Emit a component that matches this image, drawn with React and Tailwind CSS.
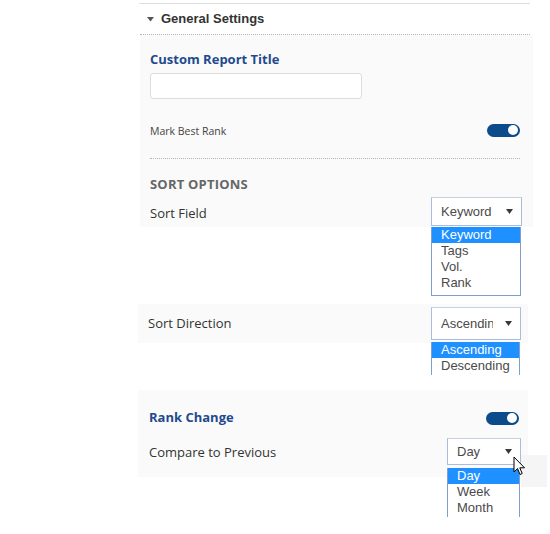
import React from "react";

function Caret({ className = "" }) {
  return (
    <svg width="7" height="5" viewBox="0 0 7 5" className={className}>
      <path d="M0 0 H7 L3.5 5 Z" fill="#3a3a3a" />
    </svg>
  );
}

function Toggle() {
  return (
    <div className="w-[33px] h-[13px] rounded-full bg-[#0b4a8b] flex items-center justify-end pr-[2px]">
      <div className="w-[10px] h-[10px] rounded-full bg-white" />
    </div>
  );
}

function Select({ value, options, w, h, textW, listTop = 2, listH, showBottom = true }) {
  return (
    <div className="relative" style={{ width: w }}>
      <div
        className="border border-[#a9bedf] border-t-[#c8d2de] bg-white flex items-center pl-[9px] pr-[8px] justify-between font-['Liberation_Sans',Arial,sans-serif] text-[13px] text-[#4a4a4a]"
        style={{ height: h }}
      >
        <span className="overflow-hidden whitespace-nowrap" style={{ width: textW }}>{value}</span>
        <Caret />
      </div>
      <div
        className={`absolute left-0 right-[1px] bg-white border-l border-r border-[#7f9fd0] overflow-hidden font-['Liberation_Sans',Arial,sans-serif] text-[13px] text-[#4a4a4a] ${showBottom ? "border-b" : ""}`}
        style={{ top: `calc(100% + ${listTop}px)`, height: listH }}
      >
        {options.map((o, i) => (
          <div
            key={o}
            className={`h-[16px] leading-[16px] pl-[9px] whitespace-nowrap ${i === 0 ? "bg-[#1e90ff] text-white" : ""}`}
          >
            {o}
          </div>
        ))}
      </div>
    </div>
  );
}

export default function App() {
  return (
    <div className="w-[550px] h-[534px] bg-white relative overflow-hidden font-['Open_Sans',sans-serif]">
      <div className="ml-[139px] w-[391px] pt-[3px]">
        <div className="border-t border-[#dedede]">
          <div className="h-[31px] border-b border-dotted border-[#b5b5b5] flex items-center pl-[7px] gap-[7px] ml-[1px]">
            <svg width="7" height="5" viewBox="0 0 7 5">
              <path d="M0 0 H7 L3.5 4.5 Z" fill="#555" />
            </svg>
            <span className="font-['Liberation_Sans',Arial,sans-serif] font-bold text-[13px] text-[#333] mt-[-1px]">
              General Settings
            </span>
          </div>
        </div>

        <div className="ml-[1px] w-[393px] bg-[#fafafa] pt-[15px] pl-[10px] pr-[11px] pb-[1px]">
          <div className="h-[18px] leading-[18px] text-[13px] font-bold text-[#1f4a8e]">Custom Report Title</div>
          <div className="mt-[5px] w-[212px] h-[26px] bg-white border border-[#dcdcdc] rounded-[3px]" />
          <div className="mt-[21px] h-[20px] flex items-center justify-between pr-[2px]">
            <span className="text-[10.5px] text-[#444] mt-[4px]">Mark Best Rank</span>
            <Toggle />
          </div>
          <div className="mt-[18px] mr-[2px] border-t border-dotted border-[#b5b5b5]" />
          <div className="mt-[16px] h-[18px] leading-[18px] text-[13px] font-bold text-[#666] tracking-[0.2px]">
            SORT OPTIONS
          </div>
          <div className="mt-[4px] h-[29px] flex items-center justify-between">
            <span className="text-[13px] text-[#333] mt-[4px]">Sort Field</span>
            <Select
              value="Keyword"
              options={["Keyword", "Tags", "Vol.", "Rank"]}
              w={91}
              h={29}
              textW={60}
              listTop={1}
              listH={69}
            />
          </div>
        </div>

        <div className="mt-[77px] -ml-[1px] w-[390px] h-[39px] bg-[#fafafa] flex items-start justify-between pl-[10px] pr-[7px]">
          <span className="text-[13px] text-[#333] leading-[18px] mt-[10px]">Sort Direction</span>
          <div className="mt-[3px]">
            <Select
              value="Ascending"
              options={["Ascending", "Descending"]}
              w={90}
              h={33}
              textW={52}
              listTop={2}
              listH={33}
              showBottom={false}
            />
          </div>
        </div>

        <div className="mt-[47px] -ml-[1px] w-[390px] h-[87px] bg-[#fafafa] pl-[11px] pr-[9px] pt-[17px]">
          <div className="h-[18px] flex items-center justify-between">
            <span className="text-[13px] font-bold text-[#1f4a8e] mt-[4px]">Rank Change</span>
            <div className="mt-[4px]">
              <Toggle />
            </div>
          </div>
          <div className="mt-[13px] h-[27px] flex items-center justify-between">
            <span className="text-[13px] text-[#333] mt-[2px]">Compare to Previous</span>
            <div className="-mr-[2px]">
              <Select
                value="Day"
                options={["Day", "Week", "Month"]}
                w={74}
                h={27}
                textW={40}
                listTop={3}
                listH={49}
                showBottom={false}
              />
            </div>
          </div>
        </div>
      </div>

      <div className="absolute left-[521px] top-[455px] w-[26px] h-[32px] bg-[#f5f5f5]" />
      <svg className="absolute left-[513px] top-[456px]" width="13" height="20" viewBox="0 0 13 20">
        <path d="M1 1 L1 16 L4.5 12.5 L7 18.5 L9.2 17.5 L6.8 11.8 L11.5 11.8 Z" fill="white" stroke="black" strokeWidth="1" strokeLinejoin="miter" />
      </svg>
    </div>
  );
}
